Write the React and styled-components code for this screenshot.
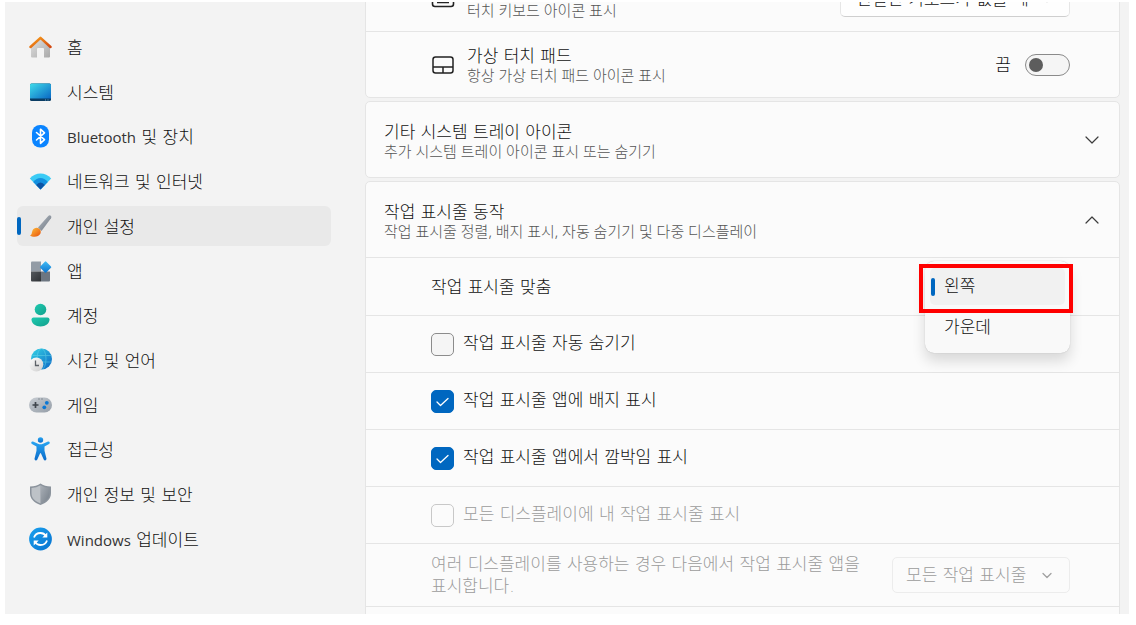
import React, { useState } from "react";
import styled, { createGlobalStyle, css } from "styled-components";

const ACCENT = "#0067c0";
const KOREAN = `"DejaVu Sans", "Noto Sans CJK KR", sans-serif`;
const KOREAN_TIGHT = `"Noto Sans", "Noto Sans CJK KR", sans-serif`;

const GlobalStyle = createGlobalStyle`
  *, *::before, *::after { box-sizing: border-box; }
  body {
    margin: 0;
    background: #fff;
    color: #111;
    font-family: ${KOREAN};
    font-size: 17px;
    font-weight: 300;
    line-height: 20px;
  }
  button, input, select { font: inherit; color: inherit; margin: 0; }
`;

const Page = styled.div`
  display: flex;
  height: 100vh;
  padding: 2px 7px 11px 5px;
`;

const Frame = styled.div`
  display: flex;
  flex: 1;
  min-width: 0;
  overflow: hidden;
  background: #f3f3f3;
`;

/* ---------- sidebar ---------- */

const Sidebar = styled.nav`
  display: flex;
  flex: 0 0 360px;
  padding: 25px 34px 55px 12px;
`;

const NavList = styled.ul`
  display: flex;
  flex: 1;
  flex-direction: column;
  justify-content: space-between;
  margin: 0;
  padding: 0;
  list-style: none;
`;

const NavLink = styled.a`
  position: relative;
  display: flex;
  align-items: center;
  gap: 15px;
  height: 40px;
  padding-left: 12px;
  border-radius: 6px;
  color: inherit;
  text-decoration: none;
  background: ${(p) => (p.$active ? "#e9e9e9" : "transparent")};

  ${(p) =>
    p.$active &&
    css`
      &::before {
        content: "";
        position: absolute;
        left: 0;
        top: 11px;
        width: 4px;
        height: 18px;
        border-radius: 2px;
        background: ${ACCENT};
      }
    `}
`;

const NavIcon = styled.svg`
  flex: none;
  width: 23px;
  height: 24px;
`;

const NavText = styled.span`
  padding-top: 2px;
`;

const Latin = styled.span`
  font-family: "Open Sans", sans-serif;
  font-size: 15px;
  font-weight: 400;
  color: #333;
`;

/* ---------- main column ---------- */

const Main = styled.main`
  display: flex;
  flex: 1;
  flex-direction: column;
  gap: 3px;
  min-width: 0;
  margin-top: -32px;
  padding-right: 9px;
`;

const Card = styled.section`
  flex: none;
  overflow: hidden;
  border: 1px solid #e5e5e5;
  border-radius: 5px;
  background: #fbfbfb;
`;

const Row = styled.div`
  display: flex;
  align-items: center;
  min-height: ${(p) => p.$height || 57}px;
  padding: 0 49px ${(p) => (p.$scrolled ? 4 : 0)}px 65px;
  color: ${(p) => (p.$disabled ? "#9c9c9c" : "inherit")};

  & + & { border-top: 1px solid #e5e5e5; }
`;

const HeaderButton = styled.button`
  display: flex;
  align-items: center;
  width: 100%;
  height: 75px;
  padding: 2px 20px 0 18px;
  border: 0;
  background: none;
  text-align: left;

  & + * { border-top: 1px solid #e5e5e5; }
`;

const RowIcon = styled.svg`
  flex: none;
  width: 24px;
  height: 24px;
  margin-right: 12px;
`;

const TextBlock = styled.span`
  display: flex;
  flex: 1;
  flex-direction: column;
  min-width: 0;
`;

const TailBlock = styled(TextBlock)`
  align-self: flex-end;
  padding-bottom: 8px;
`;

const Caption = styled.span`
  color: #555;
  font-family: ${KOREAN_TIGHT};
  font-size: 15px;
  line-height: 18px;
`;

const RowLabel = styled.span`
  flex: 1;
`;

const WrapLabel = styled.label`
  flex: 0 1 440px;
  margin-right: auto;
  line-height: 22px;
`;

const CheckLabel = styled.label`
  display: flex;
  align-items: center;
  gap: 9px;
`;

const CheckText = styled.span`
  padding-bottom: 3px;
`;

const CheckMark = styled.span`
  position: relative;
  display: flex;
  width: 23px;
  height: 23px;
`;

const CheckInput = styled.input`
  appearance: none;
  width: 23px;
  height: 23px;
  border: 1px solid #8c8c8c;
  border-radius: 5px;
  background: #f5f5f5;

  &:checked { border-color: ${ACCENT}; background: ${ACCENT}; }
  &:disabled { border-color: #c8c8c8; background: #fbfbfb; }
`;

const Tick = styled.svg`
  position: absolute;
  inset: 0;
  pointer-events: none;
`;

const SwitchLabel = styled.label`
  display: flex;
  align-items: center;
  gap: 14px;
`;

const Switch = styled.input`
  appearance: none;
  display: flex;
  align-items: center;
  width: 45px;
  height: 22px;
  padding: 0 3px;
  border: 1px solid #8a8a8a;
  border-radius: 11px;
  background: #f5f5f5;

  &::before {
    content: "";
    width: 14px;
    height: 14px;
    border-radius: 50%;
    background: #5d5d5d;
  }
  &:checked { justify-content: flex-end; background: ${ACCENT}; }
  &:checked::before { background: #fff; }
`;

const SelectBox = styled.span`
  position: relative;
  display: flex;
  flex: none;
  width: ${(p) => p.$width}px;
`;

const Select = styled.select`
  appearance: none;
  width: 100%;
  height: 36px;
  padding: 0 40px 0 ${(p) => p.$inset || 13}px;
  border: 1px solid #e6e6e6;
  border-bottom-color: #cfcfcf;
  border-radius: 5px;
  background: #fefefe;

  &:disabled {
    border-color: #ececec;
    background: #fbfbfb;
    color: #9c9c9c;
    opacity: 1;
  }
`;

const SelectArrow = styled.svg`
  position: absolute;
  right: 16px;
  top: 11px;
  width: 14px;
  height: 14px;
  pointer-events: none;
`;

const PopupAnchor = styled.div`
  position: relative;
  z-index: 1;
  width: 145px;
  height: 36px;
`;

const Popup = styled.div`
  position: absolute;
  top: -8px;
  left: 0;
  right: 0;
  display: flex;
  flex-direction: column;
  gap: 4px;
  padding: 7px 5px;
  border-radius: 9px;
  background: #f9f9f9;
  box-shadow: 0 0 1px rgba(0, 0, 0, 0.25), 0 8px 14px rgba(0, 0, 0, 0.14);
`;

const Option = styled.button`
  position: relative;
  height: 37px;
  padding: 0 14px;
  border: 0;
  border-radius: 5px;
  background: ${(p) => (p.$selected ? "#f1f1f1" : "transparent")};
  text-align: left;

  &::before {
    content: "";
    position: absolute;
    left: 1px;
    top: 10px;
    width: 4px;
    height: 18px;
    border-radius: 2px;
    background: ${(p) => (p.$selected ? ACCENT : "transparent")};
  }
`;

const Highlight = styled.div`
  position: absolute;
  top: -5px;
  left: -6px;
  width: 154px;
  height: 49px;
  border: 4px solid #f00;
  pointer-events: none;
`;

/* ---------- icons ---------- */

const Gradient = ({ id, from, to, x2 = 1, y2 = 1 }) => (
  <linearGradient id={id} x1="0" y1="0" x2={x2} y2={y2}>
    <stop offset="0" stopColor={from} />
    <stop offset="1" stopColor={to} />
  </linearGradient>
);

const icons = {
  home: (
    <>
      <defs>
        <Gradient id="homeWall" from="#e2e2e2" to="#a9a9a9" />
        <Gradient id="homeRoof" from="#f9a01b" to="#d2460f" />
      </defs>
      <path d="M2 11 11.500 3 21 11v10.500q0 1-1 1h-5v-8.500q0-1-1-1H9q-1 0-1 1v8.500H3q-1 0-1-1z" fill="url(#homeWall)" />
      <path d="M1.500 12 11.500 2.800l10 9.200" fill="none" stroke="url(#homeRoof)" strokeWidth="2.500" strokeLinecap="round" strokeLinejoin="round" />
    </>
  ),
  system: (
    <>
      <defs><Gradient id="sys" from="#3fdcea" to="#0a67c4" /></defs>
      <rect x="1" y="3.500" width="21" height="17.500" rx="1.500" fill="#0a3c63" />
      <path d="M2.500 3.500h18q1.500 0 1.500 1.500v13.500H1V5q0-1.500 1.500-1.500z" fill="url(#sys)" />
      <path d="M16 20h1M18.500 20h1" stroke="#6fa4cc" />
    </>
  ),
  bluetooth: (
    <>
      <rect x="3" y="1" width="17" height="22.500" rx="8" fill="#0a84ff" />
      <path d="m7.500 8.500 8 7.200-4 3.600V5.200l4 3.600-8 7.200" fill="none" stroke="#fff" strokeWidth="1.600" strokeLinejoin="round" strokeLinecap="round" />
    </>
  ),
  network: (
    <>
      <path d="M.800 9.500Q5.500 4.500 11.500 4.500T22.200 9.500L11.500 20.500z" fill="#3bcbf5" />
      <path d="M4.200 13Q7.500 9 11.500 9t7.300 4L11.500 20.500z" fill="#1490df" />
      <path d="M7.200 16q2-2.500 4.300-2.500T15.800 16L11.500 20.500z" fill="#0d54a5" />
    </>
  ),
  personal: (
    <>
      <defs>
        <Gradient id="brushHandle" from="#b5bcc4" to="#6c7580" />
        <Gradient id="brushTip" from="#ffc23c" to="#e8510b" />
      </defs>
      <path d="M9 13.500 19.300 1.900q1.300-1.200 2.500-.2t.2 2.500L12.500 17z" fill="url(#brushHandle)" />
      <path d="M1 21.500c2-.5 1.500-2.500 2.500-5 1.500-3 4.700-3.500 7-1.500 2.200 2.200 1.500 5.500-1.500 7-2.500 1.200-6.300.8-8-.5z" fill="url(#brushTip)" />
    </>
  ),
  apps: (
    <>
      <defs>
        <Gradient id="appDiamond" from="#42bdf5" to="#0b72cf" />
        <Gradient id="appDark" from="#55595e" to="#2f3236" />
      </defs>
      <path d="M3 2.500h9v10H2v-9q0-1 1-1z" fill="#929ba5" />
      <path d="M2 12.500h10v10H3q-1 0-1-1z" fill="url(#appDark)" />
      <path d="M12 12.500h9v9q0 1-1 1h-8z" fill="#6d7681" />
      <rect x="12.300" y="3.800" width="8.600" height="8.600" rx="1" transform="rotate(45 16.600 8.100)" fill="url(#appDiamond)" />
    </>
  ),
  account: (
    <>
      <defs><Gradient id="acct" from="#20cbb0" to="#119f8c" /></defs>
      <circle cx="11.500" cy="6.500" r="5.800" fill="url(#acct)" />
      <path d="M4.500 14.500h14q2 0 2 2c0 4-4 7-9 7s-9-3-9-7q0-2 2-2z" fill="url(#acct)" />
    </>
  ),
  time: (
    <>
      <defs>
        <Gradient id="globe" from="#35d3e5" to="#0b65c4" />
        <Gradient id="clock" from="#fff" to="#ccc" />
      </defs>
      <circle cx="12.500" cy="11" r="10.500" fill="url(#globe)" />
      <g fill="none" stroke="#7ae3ee" strokeWidth=".8" opacity=".5">
        <ellipse cx="12.500" cy="11" rx="4.500" ry="10.500" />
        <path d="M3.500 7.500h18.500M3.500 14h18.500" />
      </g>
      <circle cx="7.300" cy="16.500" r="7" fill="url(#clock)" />
      <path d="M6.500 12.500v5h3.500" fill="none" stroke="#5d6268" strokeWidth="1.300" />
    </>
  ),
  gaming: (
    <>
      <defs><Gradient id="pad" from="#c8cdd3" to="#949da7" /></defs>
      <rect x="0" y="4.500" width="23" height="15" rx="7.500" fill="url(#pad)" />
      <path d="M6.500 9v6M3.500 12h6" stroke="#3f454c" strokeWidth="1.700" />
      <path d="M9.500 6h1M12.500 6h1" stroke="#555c64" />
      <circle cx="17.800" cy="9.800" r="1.900" fill="#0b78d4" />
      <circle cx="15.300" cy="14.300" r="1.900" fill="#0b78d4" />
    </>
  ),
  access: (
    <>
      <defs><Gradient id="man" from="#28a5f2" to="#0b6bc9" x2={0} /></defs>
      <g fill="url(#man)">
        <circle cx="11.500" cy="3" r="2.700" />
        <path d="M4 4.500 9 6.800q2.500 1 5 0l5-2.300q1.300-.3 1.700.8t-.7 1.800L15.500 9.500v4.300l2 8q0 1.400-1.200 1.600-1.200.1-1.600-1L12 16.500q-.5-.9-1 0L8.300 22.400q-.6 1.200-1.700 1-1.200-.3-1.100-1.600l2-8V9.500L3 7.100Q1.900 6.400 2.300 5.300T4 4.500z" />
      </g>
    </>
  ),
  privacy: (
    <>
      <defs><Gradient id="shield" from="#aab0b7" to="#767f89" /></defs>
      <path d="M11.500 1.500q4 3 10.500 3V11c0 6-4 9.500-10.500 12C5 20.500 1 17 1 11V4.500q6.500 0 10.500-3z" fill="#8b939c" />
      <path d="M11.500 3.300q4 2.500 9 2.700v5c0 5-3.300 8.200-9 10.400z" fill="url(#shield)" />
      <path d="M11.500 3.300q-4 2.500-9 2.700v5c0 5 3.300 8.200 9 10.400z" fill="#bdc2c7" />
    </>
  ),
  update: (
    <>
      <defs><Gradient id="upd" from="#1ba1ee" to="#0672cf" /></defs>
      <circle cx="11.500" cy="12" r="11.400" fill="url(#upd)" />
      <path d="M5 10.500q1.500-4.500 6.500-4.500 3.500 0 5.500 3M18 13.500q-1.500 4.500-6.500 4.500-3.500 0-5.500-3" fill="none" stroke="#fff" strokeWidth="1.800" />
      <path d="M18.300 5.500v5h-5zM4.700 18.500v-5h5z" fill="#fff" />
    </>
  ),
};

const Chevron = ({ up }) => (
  <svg width="14" height="16" viewBox="0 0 14 16" fill="none" stroke="#3c3c3c" strokeWidth="1.200" strokeLinecap="round" strokeLinejoin="round" aria-hidden="true">
    <path d={up ? "M1 10 7 4l6 6" : "M1 4l6 6 6-6"} />
  </svg>
);

/* ---------- composed parts ---------- */

const navItems = [
  { icon: "home", label: "홈" },
  { icon: "system", label: "시스템" },
  { icon: "bluetooth", latin: "Bluetooth", label: "및 장치" },
  { icon: "network", label: "네트워크 및 인터넷" },
  { icon: "personal", label: "개인 설정", active: true },
  { icon: "apps", label: "앱" },
  { icon: "account", label: "계정" },
  { icon: "time", label: "시간 및 언어" },
  { icon: "gaming", label: "게임" },
  { icon: "access", label: "접근성" },
  { icon: "privacy", label: "개인 정보 및 보안" },
  { icon: "update", latin: "Windows", label: "업데이트" },
];

function CheckRow({ label, initial = false, disabled = false }) {
  const [checked, setChecked] = useState(initial);
  return (
    <Row $disabled={disabled}>
      <CheckLabel>
        <CheckMark>
          <CheckInput type="checkbox" checked={checked} disabled={disabled} onChange={(e) => setChecked(e.target.checked)} />
          {checked && (
            <Tick viewBox="0 0 23 23" fill="none" stroke="#fff" strokeWidth="1.300" strokeLinecap="round" strokeLinejoin="round" aria-hidden="true">
              <path d="m6 12 3.500 3.500 7.500-7" />
            </Tick>
          )}
        </CheckMark>
        <CheckText>{label}</CheckText>
      </CheckLabel>
    </Row>
  );
}

function Dropdown({ width, inset, label, value, disabled, id }) {
  return (
    <SelectBox $width={width}>
      <Select id={id} $inset={inset} aria-label={label} disabled={disabled} defaultValue={value}>
        <option>{value}</option>
      </Select>
      <SelectArrow viewBox="0 0 14 14" fill="none" stroke={disabled ? "#a0a0a0" : "#5d5d5d"} strokeWidth="1.300" strokeLinecap="round" strokeLinejoin="round" aria-hidden="true">
        <path d="m3 5.500 4 4 4-4" />
      </SelectArrow>
    </SelectBox>
  );
}

function Expander({ title, caption, open }) {
  return (
    <HeaderButton type="button" aria-expanded={!!open}>
      <TextBlock>
        <span>{title}</span>
        <Caption>{caption}</Caption>
      </TextBlock>
      <Chevron up={open} />
    </HeaderButton>
  );
}

export default function App() {
  const [align, setAlign] = useState("왼쪽");
  return (
    <Page>
      <GlobalStyle />
      <Frame>
        <Sidebar aria-label="설정">
          <NavList>
            {navItems.map((item) => (
              <li key={item.icon}>
                <NavLink href="#" $active={item.active} aria-current={item.active ? "page" : undefined}>
                  <NavIcon viewBox="0 0 23 24" aria-hidden="true">{icons[item.icon]}</NavIcon>
                  <NavText>
                    {item.latin && <><Latin>{item.latin}</Latin>{" "}</>}
                    {item.label}
                  </NavText>
                </NavLink>
              </li>
            ))}
          </NavList>
        </Sidebar>

        <Main>
          <Card>
            <Row $height={60} $scrolled>
              <RowIcon viewBox="0 0 24 24" fill="none" stroke="#222" strokeWidth="1.600" aria-hidden="true">
                <rect x="1.500" y="3" width="21" height="16.500" rx="2.500" />
                <path d="M6 15.500h12M5 7.500h2M9 7.500h2M13 7.500h2M17 7.500h2M6 11.500h2M11 11.500h2M16 11.500h2" />
              </RowIcon>
              <TailBlock>
                <Caption>터치 키보드 아이콘 표시</Caption>
              </TailBlock>
              <Dropdown width={230} inset={15} label="터치 키보드" value="연결된 키보드가 없을 때" />
            </Row>
            <Row $height={66}>
              <RowIcon viewBox="0 0 24 24" fill="none" stroke="#222" strokeWidth="1.500" aria-hidden="true">
                <rect x="2" y="4" width="20" height="16" rx="2.500" />
                <path d="M2 14h20M12 14v6" />
              </RowIcon>
              <TextBlock>
                <span>가상 터치 패드</span>
                <Caption>항상 가상 터치 패드 아이콘 표시</Caption>
              </TextBlock>
              <SwitchLabel>
                끔
                <Switch type="checkbox" role="switch" aria-label="가상 터치 패드" />
              </SwitchLabel>
            </Row>
          </Card>

          <Card>
            <Expander title="기타 시스템 트레이 아이콘" caption="추가 시스템 트레이 아이콘 표시 또는 숨기기" />
          </Card>

          <Card>
            <Expander open title="작업 표시줄 동작" caption="작업 표시줄 정렬, 배지 표시, 자동 숨기기 및 다중 디스플레이" />
            <Row $height={58}>
              <RowLabel id="align-label">작업 표시줄 맞춤</RowLabel>
              <PopupAnchor>
                <Popup role="listbox" aria-labelledby="align-label">
                  {["왼쪽", "가운데"].map((name) => (
                    <Option key={name} type="button" role="option" aria-selected={align === name} $selected={align === name} onClick={() => setAlign(name)}>
                      {name}
                    </Option>
                  ))}
                </Popup>
                <Highlight />
              </PopupAnchor>
            </Row>
            <CheckRow label="작업 표시줄 자동 숨기기" />
            <CheckRow label="작업 표시줄 앱에 배지 표시" initial />
            <CheckRow label="작업 표시줄 앱에서 깜박임 표시" initial />
            <CheckRow label="모든 디스플레이에 내 작업 표시줄 표시" disabled />
            <Row $height={63} $disabled>
              <WrapLabel htmlFor="multi-display">여러 디스플레이를 사용하는 경우 다음에서 작업 표시줄 앱을 표시합니다.</WrapLabel>
              <Dropdown id="multi-display" width={178} value="모든 작업 표시줄" disabled />
            </Row>
            <Row />
          </Card>
        </Main>
      </Frame>
    </Page>
  );
}
